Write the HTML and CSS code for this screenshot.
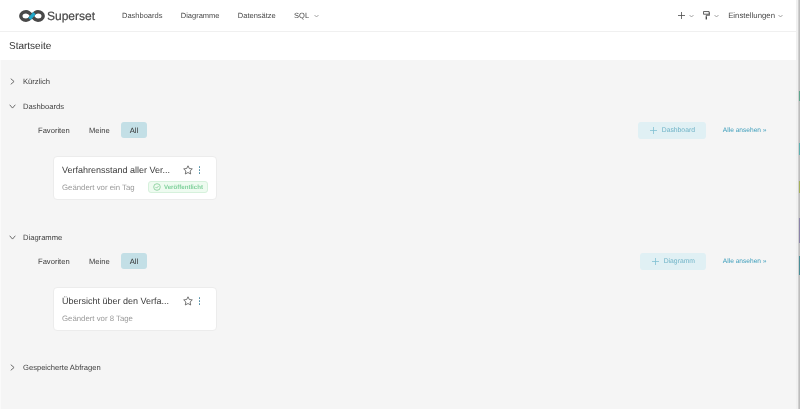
FILE: index.html
```html
<!DOCTYPE html>
<html lang="de">
<head>
<meta charset="utf-8">
<title>Superset</title>
<link rel="stylesheet" href="styles.css">
</head>
<body>
<div class="page">
  <div class="app">
    <header class="navbar">
      <div class="brand">
        <svg class="logo" width="26" height="12" viewBox="0 0 26 12">
          <path d="M13 6C11 3.200 9.500 1.800 7 1.800 4 1.800 1.800 3.500 1.800 6S4 10.200 7 10.200c2.500 0 4-1.400 6-4.200z" fill="none" stroke="#484848" stroke-width="3.400"/>
          <path d="M13 6c2 2.800 3.500 4.200 6 4.200 3 0 5.200-1.700 5.200-4.200S22 1.800 19 1.800c-2.500 0-4 1.400-6 4.200z" fill="none" stroke="#484848" stroke-width="3.400"/>
          <path d="M10.500 8.800 15.500 3.200" stroke="#20a7c9" stroke-width="3.400" fill="none"/>
        </svg>
        <span class="brand-name">Superset</span>
      </div>
      <nav class="menu">
        <a class="menu-item">Dashboards</a>
        <a class="menu-item">Diagramme</a>
        <a class="menu-item">Datensätze</a>
        <a class="menu-item">SQL <svg class="caret" viewBox="0 0 6 4"><path d="M.6.8 3 3.200 5.400.8"/></svg></a>
      </nav>
      <div class="right-menu">
        <span class="tool">
          <svg class="plus" viewBox="0 0 9 9"><path d="M4.500 0v9M0 4.500h9"/></svg>
          <svg class="caret" viewBox="0 0 6 4"><path d="M.6.8 3 3.200 5.400.8"/></svg>
        </span>
        <span class="tool">
          <svg class="roller" viewBox="0 0 8 10"><path d="M.5.5h6.500v3H.5zM7 2h.7v2.700H3.800v1.300"/><path class="solid" d="M3 6h1.600v3.500H3z"/></svg>
          <svg class="caret" viewBox="0 0 6 4"><path d="M.6.8 3 3.200 5.400.8"/></svg>
        </span>
        <span class="tool settings">Einstellungen <svg class="caret" viewBox="0 0 6 4"><path d="M.6.8 3 3.200 5.400.8"/></svg></span>
      </div>
    </header>
    <div class="titlebar">Startseite</div>
    <main class="content">
      <section class="panel panel-recent">
        <div class="panel-head"><svg class="arrow" viewBox="0 0 6 8"><path d="M1 .8 4.800 4 1 7.200"/></svg>Kürzlich</div>
      </section>

      <section class="panel panel-dash">
        <div class="panel-head"><svg class="arrow" viewBox="0 0 8 6"><path d="M.8 1 4 4.800 7.200 1"/></svg>Dashboards</div>
        <div class="toolbar">
          <div class="tabs">
            <span class="tab tab-fav">Favoriten</span>
            <span class="tab tab-mine">Meine</span>
            <span class="tab active">All</span>
          </div>
          <div class="actions">
            <span class="add add-dash"><svg class="plus" viewBox="0 0 9 9"><path d="M4.500 0v9M0 4.500h9"/></svg>Dashboard</span>
            <a class="view-all">Alle ansehen »</a>
          </div>
        </div>
        <article class="card">
          <div class="card-top">
            <span class="card-title">Verfahrensstand aller Ver...</span>
            <svg class="star" viewBox="0 0 10 10"><path d="M5 .8 6.300 3.500 9.300 3.900 7.100 6 7.700 9 5 7.500 2.300 9 2.900 6 .7 3.900 3.700 3.500z"/></svg>
            <span class="dots"><i></i><i></i><i></i></span>
          </div>
          <div class="card-bottom">
            <span class="card-meta">Geändert vor ein Tag</span>
            <span class="badge"><svg viewBox="0 0 8 8"><circle cx="4" cy="4" r="3.300"/><path d="M2.500 4 3.600 5.100 5.600 3"/></svg>Veröffentlicht</span>
          </div>
        </article>
      </section>

      <section class="panel panel-chart">
        <div class="panel-head"><svg class="arrow" viewBox="0 0 8 6"><path d="M.8 1 4 4.800 7.200 1"/></svg>Diagramme</div>
        <div class="toolbar">
          <div class="tabs">
            <span class="tab tab-fav">Favoriten</span>
            <span class="tab tab-mine">Meine</span>
            <span class="tab active">All</span>
          </div>
          <div class="actions">
            <span class="add add-chart"><svg class="plus" viewBox="0 0 9 9"><path d="M4.500 0v9M0 4.500h9"/></svg>Diagramm</span>
            <a class="view-all">Alle ansehen »</a>
          </div>
        </div>
        <article class="card">
          <div class="card-top">
            <span class="card-title">Übersicht über den Verfa...</span>
            <svg class="star" viewBox="0 0 10 10"><path d="M5 .8 6.300 3.500 9.300 3.900 7.100 6 7.700 9 5 7.500 2.300 9 2.900 6 .7 3.900 3.700 3.500z"/></svg>
            <span class="dots"><i></i><i></i><i></i></span>
          </div>
          <div class="card-bottom">
            <span class="card-meta">Geändert vor 8 Tage</span>
          </div>
        </article>
      </section>

      <section class="panel panel-saved">
        <div class="panel-head"><svg class="arrow" viewBox="0 0 6 8"><path d="M1 .8 4.800 4 1 7.200"/></svg>Gespeicherte Abfragen</div>
      </section>
    </main>
  </div>
  <div class="edge">
    <div class="edge-light"></div>
    <div class="edge-line"></div>
    <div class="edge-marks">
      <i class="m0"></i><i class="m1"></i><i class="m0b"></i><i class="m2"></i><i class="m0c"></i><i class="m3"></i><i class="m0d"></i><i class="m4"></i><i class="m0e"></i><i class="m5"></i>
    </div>
  </div>
</div>
</body>
</html>
```

FILE: styles.css
```css
* { box-sizing: border-box; }
html, body { margin: 0; height: 100%; overflow: hidden; }
body { font-family: "Liberation Sans", Arial, sans-serif; color: #484848; background: #fff; text-rendering: geometricPrecision; }
.page { display: flex; height: 409px; width: 800px; filter: blur(.3px); }
.app { width: 796px; display: flex; flex-direction: column; }
.navbar { height: 32px; flex: none; display: flex; align-items: center; padding: 0 13px 0 19px; border-bottom: 1px solid #f0f0f0; background: #fff; }
.brand { display: flex; align-items: center; gap: 2px; width: 103px; flex: none; }
.brand-name { font-size: 12px; font-weight: 400; color: #484848; -webkit-text-stroke: .2px #484848; }
.menu { display: flex; gap: 18.300px; font-size: 7.500px; color: #484848; }
.menu-item { display: flex; align-items: center; gap: 5px; }
.caret { width: 5px; height: 4px; fill: none; stroke: #777; stroke-width: .8; }
.right-menu { margin-left: auto; display: flex; align-items: center; gap: 9px; font-size: 7.800px; }
.tool { display: flex; align-items: center; gap: 4px; }
.settings { gap: 3px; }
.plus { width: 7px; height: 7px; fill: none; stroke: #484848; stroke-width: 1; }
.roller { width: 7px; height: 9px; fill: none; stroke: #484848; stroke-width: 1; }
.roller .solid { fill: #484848; stroke: none; }
.titlebar { height: 28px; flex: none; display: flex; align-items: center; padding: 0 0 0 9px; font-size: 10px; color: #323232; background: #fff; }
.content { flex: 1; background: #f5f5f5; border-left: 1px solid #fafafa; padding-top: 15px; }
.panel-head { display: flex; align-items: center; height: 12px; font-size: 7.600px; padding-left: 8px; color: #404040; }
.arrow { width: 7px; height: 7px; margin-right: 7px; fill: none; stroke: #5a5a5a; stroke-width: 1; flex: none; }
.panel-recent { height: 25px; }
.panel-dash { height: 131px; }
.panel-chart { height: 130px; }
.toolbar { display: flex; justify-content: space-between; align-items: center; margin-top: 8px; padding-left: 37px; padding-right: 29.500px; height: 20px; }
.tabs { display: flex; align-items: center; font-size: 7.600px; color: #404040; }
.tab { height: 16px; display: flex; align-items: center; border-radius: 3px; }
.tab-fav { width: 51px; }
.tab-mine { width: 32px; }
.tab.active { background: #c3dfe6; color: #323232; width: 26px; justify-content: center; }
.actions { display: flex; align-items: center; gap: 16.500px; }
.add { height: 17px; background: #e0f0f4; border-radius: 3px; color: #6fb3c7; font-size: 6.800px; display: flex; align-items: center; gap: 5px; justify-content: center; }
.add .plus { stroke: #7fc0d2; }
.add-dash { width: 68px; }
.add-chart { width: 66px; }
.view-all { color: #3c9dbb; font-size: 6.600px; }
.card { margin: 16px 0 0 52px; width: 164px; height: 44px; background: #fff; border: 1px solid #ececec; border-radius: 4px; padding: 6px 8px 0 8px; }
.card-top { display: flex; align-items: center; height: 14px; }
.card-title { font-size: 9px; color: #3c3c3c; flex: 1; white-space: nowrap; overflow: hidden; }
.star { width: 10px; height: 10px; fill: none; stroke: #666; stroke-width: .9; flex: none; }
.dots { display: flex; flex-direction: column; gap: 1.500px; margin: 0 8px 0 6px; flex: none; }
.dots i { display: block; width: 1.500px; height: 1.500px; background: #4f8ea5; border-radius: 50%; }
.card-bottom { display: flex; align-items: center; justify-content: space-between; margin-top: 4px; height: 12px; }
.card-meta { font-size: 7.800px; color: #9a9a9a; }
.badge { display: flex; align-items: center; gap: 3px; width: 60px; height: 12px; padding: 0 0 0 4px; border: 1px solid #d6f1dc; background: #eefbf0; border-radius: 3px; font-size: 6.100px; font-weight: 700; color: #7ed09a; }
.badge svg { width: 8px; height: 8px; fill: none; stroke: #74c68a; stroke-width: .7; }
.edge { width: 4px; flex: none; display: flex; background: #f1f1f1; }
.edge-light { width: 2px; background: #f0f0f0; }
.edge-line { width: 1px; background: #cfcfcf; }
.edge-marks { width: 1px; display: flex; flex-direction: column; background: #bdbdbd; }
.edge-marks i { display: block; }
.m0 { height: 91px; } .m0b { height: 42px; } .m0c { height: 26px; } .m0d { height: 25px; } .m0e { height: 13px; }
.m1 { height: 10px; background: #5fa58d; }
.m2 { height: 12px; background: #5fb0b0; }
.m3 { height: 12px; background: #a5b05a; }
.m4 { height: 25px; background: #8a83a8; }
.m5 { height: 19px; background: #4a8d96; }
```
